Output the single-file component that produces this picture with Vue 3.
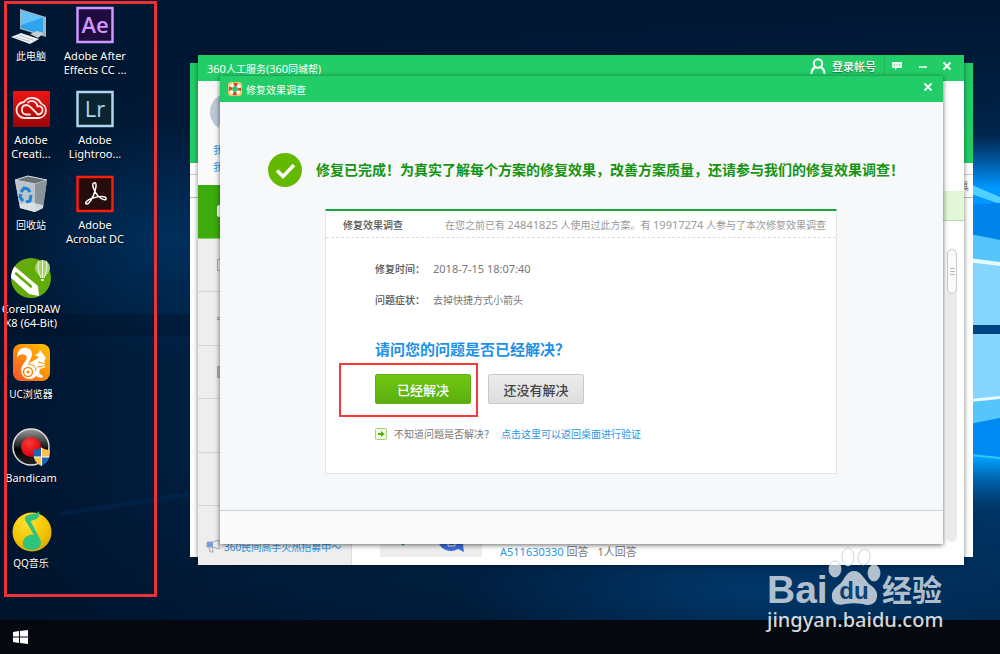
<script setup>
import { ref } from 'vue'

const surveyOpen = ref(true)
const solved = ref(null)

const navIcons = ['chat', 'box', 'dot', 'flag', '', '']

const details = [
  { label: '修复时间：', value: '2018-7-15 18:07:40', num: true },
  { label: '问题症状：', value: '去掉快捷方式小箭头', num: false },
]

function answer(value) {
  solved.value = value
}
</script>

<template>
<div class="screen">
  <main class="desktop">
    <svg class="wallpaper" viewBox="0 0 1000 620" preserveAspectRatio="none" aria-hidden="true">
      <defs>
        <linearGradient id="wall" x1="0" y1="0" x2="1" y2="0">
          <stop offset="0" stop-color="#001630" />
          <stop offset="0.2" stop-color="#001f40" />
          <stop offset="0.6" stop-color="#00284f" />
          <stop offset="1" stop-color="#003a70" />
        </linearGradient>
        <linearGradient id="wallTop" x1="0" y1="0" x2="0" y2="1">
          <stop offset="0" stop-color="#001733" />
          <stop offset="0.15" stop-color="#001733" stop-opacity="0.8" />
          <stop offset="0.4" stop-color="#001733" stop-opacity="0" />
          <stop offset="0.75" stop-color="#001026" stop-opacity="0" />
          <stop offset="1" stop-color="#001026" stop-opacity="0.45" />
        </linearGradient>
        <radialGradient id="glow" cx="0.5" cy="0.5" r="0.5">
          <stop offset="0" stop-color="#00376a" />
          <stop offset="1" stop-color="#00376a" stop-opacity="0" />
        </radialGradient>
        <linearGradient id="beam" x1="0" y1="0" x2="0" y2="1">
          <stop offset="0" stop-color="#0078d8" stop-opacity="0" />
          <stop offset="0.14" stop-color="#0098ff" />
          <stop offset="0.86" stop-color="#00a2ff" />
          <stop offset="1" stop-color="#0060b0" stop-opacity="0" />
        </linearGradient>
      </defs>
      <rect width="1000" height="620" fill="url(#wall)" />
      <rect width="1000" height="620" fill="url(#wallTop)" />
      <ellipse cx="170" cy="240" rx="170" ry="120" fill="url(#glow)" opacity="0.7" />
      <ellipse cx="760" cy="590" rx="300" ry="70" fill="url(#glow)" />
      <path d="M0 314H200V336H0z" fill="#001128" opacity="0.4" />
      <path d="M60 512L200 490V496L60 516z" fill="#003363" opacity="0.3" />
      <rect x="940" y="135" width="60" height="375" fill="url(#beam)" />
      <path d="M960 180L1000 197V204L960 190z" fill="#4fd0ff" />
      <path d="M960 205L1000 203V240L960 232z" fill="#0083ea" />
      <path d="M960 232L1000 240V264L960 258z" fill="#55c5fb" />
      <path d="M960 258L1000 264V325H960z" fill="#86d5fd" />
      <path d="M960 257L1000 262V266L960 261z" fill="#e6fbff" />
      <path d="M960 325H1000V334H960z" fill="#004583" />
      <path d="M960 334H1000V398L960 402z" fill="#86d5fd" />
      <path d="M960 401L1000 397V418L960 426z" fill="#55c5fb" />
      <path d="M960 400L1000 396V399L960 403z" fill="#e6fbff" />
      <path d="M960 426L1000 418V458L960 453z" fill="#008bf3" />
      <path d="M960 453L1000 457V459L960 455z" fill="#30c8f4" />
    </svg>

    <!-- shortcuts -->
    <nav class="shortcuts">
      <button class="shortcut">
        <svg viewBox="0 0 40 40">
          <path d="M9 4L35 12V32L9 24z" fill="#9fb4bf" />
          <path d="M10 6L32 12.500V29.500L10 23z" fill="#2ea4ee" />
          <path d="M10 6L32 12.500L10 20z" fill="#62c3fb" />
          <path d="M19 29L26 26L33 28L27 33z" fill="#c4ced4" />
          <path d="M0 32L10 28L28 34L19 39z" fill="#eef1f2" />
          <path d="M4 32L19 36.500M8 30L23 35.500" stroke="#a9b4ba" stroke-width="0.8" />
        </svg>
        <span>此电脑</span>
      </button>
      <button class="shortcut">
        <svg viewBox="0 0 40 40">
          <defs>
            <linearGradient id="cc" x1="0" y1="0" x2="0" y2="1">
              <stop offset="0" stop-color="#f01414" /><stop offset="1" stop-color="#9b0505" />
            </linearGradient>
          </defs>
          <rect x="2" y="2" width="37" height="36" fill="url(#cc)" />
          <g fill="none" stroke="#ffe9e6" stroke-width="1.800" stroke-linecap="round">
            <path d="M14 29h14a7.500 7.500 0 0 0 2-14.500A10 10 0 0 0 13 13a8 8 0 0 0 1 16z" />
            <path d="M19 25.500h-4a4.800 4.800 0 0 1 0-9.500c3 0 4 1.500 5.500 3l6 6" />
            <path d="M17 13.500c4-3.500 9-.5 9.500 4 3-1 5.500 1 5 4-.5 3-3 4-5 4" />
          </g>
        </svg>
        <span class="latin">Adobe<br>Creati...</span>
      </button>
      <button class="shortcut">
        <svg viewBox="0 0 40 40">
          <path d="M4 6L17 2L36 6L32 34L24 38L9 34z" fill="#a7b0b6" />
          <path d="M4 6L17 2L36 6L24 10z" fill="#67727a" stroke="#d6dde1" stroke-width="1" />
          <path d="M4 7L24 10V38L9 34z" fill="#bcc5ca" />
          <path d="M24 10L36 6L32 34L24 38z" fill="#89949c" />
          <path d="M9 30L19 28L32 31V34L24 38L9 34z" fill="#e4e8ea" opacity="0.8" />
          <g fill="none" stroke="#1d82d6" stroke-width="3">
            <path d="M10 18l3-4 4 1 2 3" /><path d="M20 21l-1 6-4 1" /><path d="M12 27l-3-4 1-3" />
          </g>
        </svg>
        <span>回收站</span>
      </button>
      <button class="shortcut">
        <svg viewBox="0 0 40 40">
          <defs><clipPath id="corelClip"><circle cx="20" cy="20" r="20" /></clipPath></defs>
          <circle cx="20" cy="20" r="20" fill="#62ab0b" />
          <g clip-path="url(#corelClip)">
            <path d="M2 7L27 28L28 38L18 36L-3 17z" fill="#fff" />
            <path d="M5 15.500L20 28.500" stroke="#62ab0b" stroke-width="2.500" stroke-linecap="round" />
          </g>
          <path d="M24 10a7.500 8 0 0 1 15 0c0 4-4 7-6 10h-3c-2-3-6-6-6-10z" fill="#a6d36e" />
          <path d="M31.500 2v18M28 3c-2 6 0 12 2 17M35 3c2 6 0 12-2 17" stroke="#eef8de" fill="none" />
          <path d="M30 21h3v2h-3z" fill="#dff0c4" />
        </svg>
        <span class="latin">CorelDRAW<br>X8 (64-Bit)</span>
      </button>
      <button class="shortcut">
        <svg viewBox="0 0 40 40">
          <defs>
            <linearGradient id="uc" x1="0" y1="1" x2="1" y2="0">
              <stop offset="0" stop-color="#f9522a" /><stop offset="0.6" stop-color="#ff9a08" /><stop offset="1" stop-color="#ffc400" />
            </linearGradient>
          </defs>
          <rect x="2" y="1" width="37" height="37" rx="8" fill="url(#uc)" />
          <path d="M6 15C6 8 10 4 16 5c6 1 6 8 3 12l-2 4c4-3 8-4 11-7l-4-2 4-2 1-3 3 4 3 4-2 3c2 2 1 4 0 5l2 1-6 2-1 4 4 3c0 2-3 2-5 1l-2-1c-3 4-10 4-13 0-3-4-2-9 1-13 3-3 4-7 1-8-3-2-7 0-8 3z" fill="#fff" />
          <circle cx="17" cy="29" r="4.500" fill="none" stroke="#ff8a12" stroke-width="1.600" />
          <circle cx="17" cy="29" r="1.600" fill="#ff8a12" />
          <path d="M17 21c5 0 8 3 8 7M27 19l8 2M26 24l7-1" stroke="#ff9a10" fill="none" stroke-width="1.200" />
        </svg>
        <span>UC浏览器</span>
      </button>
      <button class="shortcut">
        <svg viewBox="0 0 40 40">
          <defs>
            <linearGradient id="band" x1="0" y1="0" x2="0" y2="1">
              <stop offset="0" stop-color="#9a9a9a" /><stop offset="0.5" stop-color="#1c1c1c" /><stop offset="0.55" stop-color="#000" /><stop offset="1" stop-color="#222" />
            </linearGradient>
            <radialGradient id="rec" cx="0.4" cy="0.3" r="0.7">
              <stop offset="0" stop-color="#ff3a36" /><stop offset="1" stop-color="#d3000c" />
            </radialGradient>
            <clipPath id="shield"><path d="M22 23c4 0 6-1 8.500-2.500C33 22 35 23 39 23c0 8-2 13-8.500 16C24 36 22 31 22 23z" /></clipPath>
          </defs>
          <circle cx="20" cy="20" r="18" fill="url(#band)" stroke="#dcdcdc" stroke-width="1.500" />
          <circle cx="20" cy="20" r="10" fill="url(#rec)" />
          <g clip-path="url(#shield)">
            <path d="M20 18h10.500v12H20zM30.500 30H41v12H30.500z" fill="#1b66b8" />
            <path d="M30.500 18H41v12H30.500zM20 30h10.500v12H20z" fill="#ffc24e" />
            <path d="M30.500 18v24M20 30h22" stroke="#fff" stroke-width="1" />
          </g>
        </svg>
        <span class="latin">Bandicam</span>
      </button>
      <button class="shortcut">
        <svg viewBox="0 0 40 40">
          <defs>
            <radialGradient id="qq" cx="0.4" cy="0.25" r="0.8">
              <stop offset="0" stop-color="#ffe13a" /><stop offset="0.6" stop-color="#f4c600" /><stop offset="1" stop-color="#dba800" />
            </radialGradient>
          </defs>
          <circle cx="21" cy="20" r="19.500" fill="url(#qq)" />
          <path d="M28 -1c1 5-1 8-5 9-3 1-3 1-3 2l8 15c4 6 2 13-7 13-6 0-10-3-9-8 1-6 7-8 11-7L14 8c-1-4 3-5 7-6 4 0 6-1 7-3z" fill="#31c27c" />
        </svg>
        <span>QQ音乐</span>
      </button>
      <button class="shortcut">
        <svg viewBox="0 0 40 40">
          <rect x="2.500" y="3" width="35" height="34" fill="#1f0b3d" stroke="#cf96fd" stroke-width="2.500" />
          <text class="app-letters" x="20" y="28" text-anchor="middle" fill="#cf96fd" font-weight="600">Ae</text>
        </svg>
        <span class="latin">Adobe After<br>Effects CC ...</span>
      </button>
      <button class="shortcut">
        <svg viewBox="0 0 40 40">
          <rect x="2.500" y="3" width="35" height="34" fill="#0c2430" stroke="#add5ec" stroke-width="2.500" />
          <text class="app-letters" x="20" y="28" text-anchor="middle" fill="#add5ec">Lr</text>
        </svg>
        <span class="latin">Adobe<br>Lightroo...</span>
      </button>
      <button class="shortcut">
        <svg viewBox="0 0 40 40">
          <rect x="2.500" y="3" width="35" height="34" fill="#260c0c" stroke="#f61d0b" stroke-width="2.500" />
          <path d="M19 9c2-1 3 2 1 8-2 7-6 13-8 13-3 0-1-4 6-6 6-2 12-2 13 0 1 3-4 2-8-2-4-5-7-12-4-13z" fill="none" stroke="#fff" stroke-width="1.500" />
        </svg>
        <span class="latin">Adobe<br>Acrobat DC</span>
      </button>
    </nav>
    <div class="shortcuts-frame"></div>

    <!-- rear window -->
    <section class="window rear">
      <div class="rear-head"></div>
      <div class="rear-tabs"><span>具</span></div>
    </section>

    <!-- service window -->
    <section class="window service">
      <header class="titlebar">
        <h1><span class="num">360</span>人工服务<span class="num">(360</span>同城帮)</h1>
        <div class="service-tools">
          <button class="login">
            <svg viewBox="0 0 16 16" width="16" height="16" fill="none" stroke="#fff" stroke-width="2">
              <circle cx="8" cy="5.500" r="4.200" /><path d="M1.500 16c0-4 2-6 4-7M14.500 16c0-4-2-6-4-7" />
            </svg>
            登录帐号
          </button>
          <button class="tool feedback" aria-label="feedback">
            <svg viewBox="0 0 12 12" width="12" height="12">
              <path d="M1 2h10v6H6l-2 2V8H1z" fill="#e8fbef" />
              <path d="M3 5h1M5.500 5h1M8 5h1" stroke="#22cc66" />
            </svg>
          </button>
          <button class="tool" aria-label="minimize">
            <svg viewBox="0 0 12 12" width="12" height="12"><path d="M2 7h8" stroke="#fff" stroke-width="1.500" /></svg>
          </button>
          <button class="tool" aria-label="close">
            <svg viewBox="0 0 12 12" width="12" height="12"><path d="M2.500 2.500l7 7M9.500 2.500l-7 7" stroke="#fff" stroke-width="1.800" /></svg>
          </button>
        </div>
      </header>
      <div class="service-body">
        <aside class="sidebar">
          <div class="profile">
            <svg class="avatar" viewBox="0 0 38 38">
              <circle cx="19" cy="19" r="19" fill="#bcc6d4" />
              <path d="M9 35c0-6 4-10 10-10s10 4 10 10a19 19 0 0 1-20 0z" fill="#eef1f5" />
            </svg>
            <a href="#">我</a>
            <a href="#">我</a>
          </div>
          <ul class="side-nav">
            <li v-for="(icon, index) in navIcons" :key="index" :class="{ active: index === 0 }">
              <i v-if="icon" :class="icon"></i>
            </li>
          </ul>
          <div class="promo">
            <svg viewBox="0 0 14 14" width="14" height="14">
              <path d="M1 3h6v5H1z" fill="#6f9fe0" />
              <path d="M1 3h6l6-2v9L7 8H1zM3 8l1 5h3L6 8" fill="none" stroke="#a0a5aa" />
            </svg>
            <a href="#">360民间高手火热招募中～</a>
          </div>
        </aside>
        <div class="questions">
          <div class="notice"></div>
          <div class="question">
            <div class="thumb">
              <svg viewBox="0 0 102 30" width="102" height="30">
                <path d="M19 14h8l-4 5z" fill="#35a835" />
                <path d="M58 12a13 12 0 0 0 20 10l6 3-1-7 2-4z" fill="#3f6fdc" />
                <path d="M68 13h7v6h-7z" fill="none" stroke="#fff" />
              </svg>
            </div>
            <p><a href="#">A511630330</a> 回答 <span>1人回答</span></p>
          </div>
          <div class="scroll-track"><div class="scroll-thumb"></div></div>
        </div>
      </div>
    </section>

    <!-- survey dialog -->
    <section v-if="surveyOpen" class="window survey" role="dialog" aria-labelledby="survey-title">
      <header class="titlebar">
        <svg class="ring" viewBox="0 0 14 14" width="14" height="14">
          <rect width="14" height="14" rx="3" fill="#e8c860" />
          <circle cx="7" cy="7" r="4.500" fill="none" stroke="#fff" stroke-width="3.500" />
          <circle cx="7" cy="7" r="4.500" fill="none" stroke="#e2402c" stroke-width="3.500" stroke-dasharray="3.530" stroke-dashoffset="1.760" />
          <circle cx="7" cy="7" r="2.800" fill="#22cc66" />
        </svg>
        <h2 id="survey-title">修复效果调查</h2>
        <button class="tool survey-close" aria-label="close" @click="surveyOpen = false">
          <svg viewBox="0 0 12 12" width="12" height="12"><path d="M2.500 2.500l7 7M9.500 2.500l-7 7" stroke="#fff" stroke-width="1.800" /></svg>
        </button>
      </header>
      <div class="survey-body">
        <div class="status">
          <svg viewBox="0 0 34 34" width="34" height="34">
            <circle cx="17" cy="17" r="17" fill="#62b900" />
            <path d="M9 17.500l6 6L26 12" fill="none" stroke="#fff" stroke-width="3.500" />
          </svg>
          <p>修复已完成！为真实了解每个方案的修复效果，改善方案质量，还请参与我们的修复效果调查！</p>
        </div>
        <div class="card">
          <div class="card-head">
            <h3>修复效果调查</h3>
            <p>在您之前已有 <span class="num">24841825</span> 人使用过此方案。有 <span class="num">19917274</span> 人参与了本次修复效果调查</p>
          </div>
          <div class="card-body">
            <dl>
              <div v-for="item in details" :key="item.label">
                <dt>{{ item.label }}</dt>
                <dd :class="{ num: item.num }">{{ item.value }}</dd>
              </div>
            </dl>
            <h4>请问您的问题是否已经解决？</h4>
            <div class="answers">
              <div class="marked">
                <button class="answer yes" @click="answer(true)">已经解决</button>
              </div>
              <button class="answer no" @click="answer(false)">还没有解决</button>
            </div>
            <p class="hint">
              <svg viewBox="0 0 12 12" width="12" height="12">
                <rect x="0.500" y="0.500" width="11" height="11" rx="1" fill="#effadf" stroke="#a4d276" />
                <path d="M3 5h3V3l3.500 3L6 9V7H3z" fill="#58a814" />
              </svg>
              <span>不知道问题是否解决？</span>
              <a href="#">点击这里可以返回桌面进行验证</a>
            </p>
          </div>
        </div>
      </div>
      <footer class="survey-foot"></footer>
    </section>
  </main>

  <footer class="taskbar">
    <button aria-label="start">
      <svg viewBox="0 0 15 14" width="15" height="14" fill="#fff">
        <path d="M0 2l6-1v5.500H0zM7 1l8-1v6.500H7zM0 7.500h6V13l-6-1zM7 7.500h8V14l-8-1z" />
      </svg>
    </button>
  </footer>

  <svg class="watermark" viewBox="0 0 190 92" width="190" height="92">
    <g class="wm-logo">
      <text x="3" y="58" class="wm-bai">Bai</text>
      <g class="wm-toes">
        <ellipse cx="71" cy="24" rx="6" ry="8" />
        <ellipse cx="84" cy="12" rx="6" ry="9" />
        <ellipse cx="100" cy="12" rx="6" ry="8" transform="rotate(12 100 12)" />
        <ellipse cx="110" cy="28" rx="6" ry="8" />
      </g>
      <path d="M90 26c7 0 10 8 15 13 6 4 9 8 8 13-1 8-9 9-14 7-6-1-12-1-18 0-6 2-13 0-13-7-1-6 4-10 9-14 4-5 6-12 13-12z" />
      <text x="90" y="54" class="wm-du" text-anchor="middle">du</text>
      <text x="118" y="56" class="wm-cn">经验</text>
    </g>
    <text x="3" y="82" class="wm-url">jingyan.baidu.com</text>
  </svg>
</div>
</template>

<style>
body{
    margin: 0;
    background: #05090f;
}
</style>

<style scoped>
.screen{
    position: relative;
    display: flex;
    flex-direction: column;
    min-height: 100vh;
    overflow: hidden;
    font-family: "Noto Sans", "Noto Sans CJK SC", sans-serif;
    font-size: 10px;
    color: #777;
}
h1, h2, h3, h4, p, ul, dl, dd{
    margin: 0;
    padding: 0;
}
button{
    font-family: inherit;
    padding: 0;
    border: 0;
    background: none;
    cursor: pointer;
}
a{
    color: #2b95e6;
    text-decoration: none;
}
svg{
    display: block;
    flex: none;
}
.num{
    font-size: 11px;
}
.desktop{
    position: relative;
    flex: 1;
    min-height: 600px;
}
.wallpaper{
    position: absolute;
    inset: 0;
    width: 100%;
    height: 100%;
}

/* shortcuts */
.shortcuts{
    position: absolute;
    top: 5px;
    bottom: 24px;
    left: 0;
    display: grid;
    grid-template-columns: 62px 66px;
    grid-template-rows: repeat(7, 1fr);
    grid-auto-flow: column;
}
.shortcut{
    display: flex;
    flex-direction: column;
    align-items: center;
    gap: 4px;
    color: #fff;
    font-size: 10px;
    line-height: 15px;
    white-space: nowrap;
    text-shadow: 0 1px 2px #000;
}
.shortcut svg{
    width: 40px;
    height: 40px;
    overflow: visible;
}
.shortcut .latin{
    font-size: 11px;
    line-height: 14px;
}
.app-letters{
    font-family: "Open Sans", sans-serif;
    font-size: 22px;
    text-shadow: none;
}
.shortcuts-frame{
    position: absolute;
    top: 1px;
    bottom: 23px;
    left: 4px;
    width: 147px;
    border: 3px solid #ec3237;
    pointer-events: none;
}

/* windows */
.window{
    position: absolute;
    background: #fff;
}
.rear{
    top: 63px;
    right: 27px;
    bottom: 63px;
    left: 190px;
}
.rear-head{
    height: 100px;
    background: #22cc66;
}
.rear-tabs{
    height: 22px;
    margin-top: 11px;
    border-top: 1px solid #ccc;
    border-bottom: 1px solid #bbb;
    text-align: right;
    line-height: 22px;
    padding-right: 4px;
}
.titlebar{
    display: flex;
    align-items: center;
    height: 26px;
    background: #22cc66;
    color: #fff;
}
.titlebar h1, .titlebar h2{
    font-size: 10px;
    font-weight: 400;
}
.tool{
    display: grid;
    place-items: center;
    width: 24px;
    height: 20px;
}
.service{
    display: flex;
    flex-direction: column;
    top: 55px;
    right: 36px;
    bottom: 55px;
    left: 198px;
    box-shadow: 0 0 5px rgba(0, 0, 0, 0.5);
}
.service .titlebar{
    justify-content: space-between;
    padding: 0 5px 0 9px;
}
.service-tools{
    display: flex;
    align-items: center;
    height: 20px;
    margin-bottom: 5px;
}
.login{
    display: flex;
    align-items: center;
    gap: 6px;
    padding-right: 8px;
    color: #fff;
    font-size: 11px;
    font-weight: 500;
    text-shadow: 0 1px 1px #14803e;
}
.feedback{
    border-left: 1px solid #1fb55a;
    margin-right: 3px;
}
.service-body{
    flex: 1;
    display: flex;
}
.sidebar{
    width: 153px;
    display: flex;
    flex-direction: column;
    background: #eee;
    border-right: 1px solid #ddd;
}
.profile{
    display: flex;
    flex-direction: column;
    height: 92px;
    padding: 12px 12px 0;
    line-height: 17px;
    background: #fafafa;
}
.avatar{
    width: 38px;
    height: 38px;
    margin-bottom: 11px;
}
.profile a{
    padding-left: 3px;
}
.side-nav{
    flex: 1;
    display: grid;
    grid-auto-rows: 1fr;
    list-style: none;
}
.side-nav li{
    display: flex;
    align-items: center;
    padding-left: 19px;
    border-bottom: 1px solid #d2d6d8;
}
.side-nav .active{
    background: #3cab0d;
    border-color: #90cf70;
}
.side-nav i{
    width: 12px;
    height: 10px;
    border: 1px solid #aaa;
}
.side-nav .chat{
    background: #fff;
    border-color: #fff;
    border-radius: 2px;
}
.side-nav .dot{
    height: 1px;
}
.side-nav .flag{
    background: #bbb;
}
.promo{
    display: flex;
    align-items: center;
    gap: 4px;
    height: 38px;
    padding: 21px 0 0 8px;
    white-space: nowrap;
}
.questions{
    position: relative;
    flex: 1;
    display: flex;
    flex-direction: column;
    justify-content: space-between;
}
.notice{
    height: 29px;
    margin-top: 110px;
    background: #e0f8d6;
    border-bottom: 1px solid #b5dca4;
}
.question{
    display: flex;
    align-items: flex-end;
    gap: 18px;
    padding: 0 28px 5px;
}
.thumb{
    background: #eee;
    margin-bottom: 3px;
}
.question p{
    font-size: 11px;
    line-height: 16px;
    white-space: nowrap;
}
.question span{
    margin-left: 6px;
}
.scroll-track{
    position: absolute;
    top: 168px;
    right: 7px;
    bottom: 23px;
    width: 10px;
    border-radius: 5px;
    background: #ebebeb;
}
.scroll-thumb{
    display: grid;
    place-items: center;
    height: 43px;
    border: 1px solid #ccc;
    border-radius: 5px;
    background: #fafafa;
}
.scroll-thumb::before{
    content: "";
    width: 5px;
    height: 5px;
    border-top: 1px solid #bbb;
    border-bottom: 1px solid #bbb;
    background: linear-gradient(#fafafa 2px, #bbb 2px, #bbb 3px, #fafafa 3px);
}

/* survey */
.survey{
    top: 76px;
    right: 57px;
    left: 220px;
    background: #f6f8fa;
    box-shadow: 0 1px 5px rgba(0, 0, 0, 0.6);
}
.survey .titlebar{
    padding: 0 3px 0 8px;
    gap: 4px;
}
.survey-close{
    margin-left: auto;
    margin-bottom: 5px;
}
.survey-body{
    padding: 51px 106px 36px 105px;
}
.status{
    display: flex;
    align-items: center;
    gap: 14px;
    margin: 0 -60px 22px -57px;
    color: #149414;
    font-size: 14px;
    font-weight: 700;
    line-height: 20px;
    white-space: nowrap;
}
.card{
    background: #fff;
    border: 1px solid #e3e6e8;
    border-top: 2px solid #18a83a;
}
.card-head{
    display: flex;
    align-items: center;
    justify-content: space-between;
    height: 26px;
    padding: 0 10px 0 17px;
    border-bottom: 1px dashed #ddd;
    color: #999;
}
.card-head h3{
    color: #555;
    font-size: 10px;
    font-weight: 500;
}
.card-body{
    padding: 21px 49px 29px;
}
dl > div{
    display: flex;
    align-items: center;
    gap: 8px;
    line-height: 20px;
}
dl > div + div{
    margin-top: 11px;
}
dt{
    color: #555;
    font-weight: 500;
}
h4{
    margin: 27px 0 13px;
    color: #1e90e8;
    font-size: 15px;
    line-height: 24px;
}
.answers{
    display: flex;
    gap: 17px;
}
.answer{
    width: 96px;
    height: 30px;
    border-radius: 2px;
    font-size: 13px;
    font-weight: 500;
}
.yes{
    display: block;
    color: #fff;
    background: linear-gradient(#72c711, #5aaf10);
    border: 1px solid #5fae14;
}
.no{
    color: #444;
    background: linear-gradient(#ececec, #dedede);
    border: 1px solid #c8c8c8;
}
.marked{
    position: relative;
}
.marked::after{
    content: "";
    position: absolute;
    inset: -11px -7px -13px -36px;
    border: 2px solid #f8373b;
    pointer-events: none;
}
.hint{
    display: flex;
    align-items: center;
    gap: 7px;
    margin-top: 20px;
    line-height: 20px;
}
.survey-foot{
    height: 33px;
    background: #fafafa;
    border-top: 1px solid #cdd1d4;
}

/* taskbar */
.taskbar{
    display: flex;
    align-items: center;
    height: 34px;
    padding-left: 13px;
    background: #05090f;
}

/* watermark */
.watermark{
    position: absolute;
    right: 46px;
    bottom: 17px;
    pointer-events: none;
}
.wm-logo{
    fill: rgba(255, 255, 255, 0.7);
}
.wm-toes{
    stroke: rgba(190, 198, 208, 0.8);
}
.wm-bai{
    font-family: "Liberation Sans", sans-serif;
    font-weight: 700;
    font-size: 39px;
}
.wm-du{
    font-family: "Liberation Sans", sans-serif;
    font-weight: 700;
    font-size: 24px;
    fill: #0b4276;
}
.wm-cn{
    font-family: "Noto Sans CJK SC", sans-serif;
    font-weight: 700;
    font-size: 30px;
}
.wm-url{
    font-family: "Noto Sans", sans-serif;
    font-weight: 500;
    font-size: 20px;
    fill: #d3d8dd;
}
</style>
